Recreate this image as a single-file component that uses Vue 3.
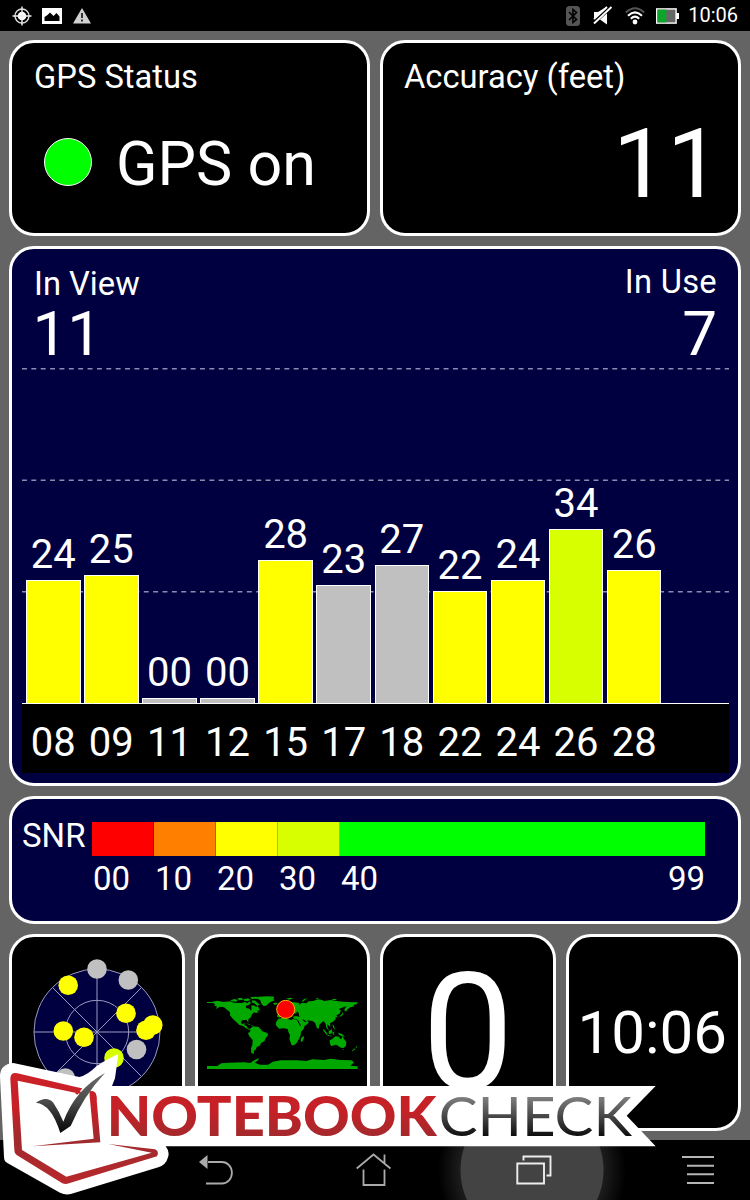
<script setup>
import { computed, ref } from "vue";

const time = ref("10:06");

const satellites = ref([
  { id: "08", snr: 24, used: true },
  { id: "09", snr: 25, used: true },
  { id: "11", snr: 0, used: false },
  { id: "12", snr: 0, used: false },
  { id: "15", snr: 28, used: true },
  { id: "17", snr: 23, used: false },
  { id: "18", snr: 27, used: false },
  { id: "22", snr: 22, used: true },
  { id: "24", snr: 24, used: true },
  { id: "26", snr: 34, used: true },
  { id: "28", snr: 26, used: true },
]);

const inUse = computed(() => satellites.value.filter((s) => s.used).length);

const pad = (n) => String(n).padStart(2, "0");

const barHeight = (snr) => Math.max(5, snr * 5.11 - 0.5) + "px";

const barColor = (sat) => {
  if (!sat.used) return "gray";
  return sat.snr >= 30 ? "lime" : "yellow";
};

const gridLines = [0.7, 112.3, 223.8];

// positions relative to the centre of the sky view
const sky = [
  { x: 0, y: -63, color: "#c0c0c0" },
  { x: 31.3, y: -52, color: "#c0c0c0" },
  { x: -28.8, y: -46.7, color: "#ffff00" },
  { x: 29, y: -18.7, color: "#ffff00" },
  { x: -33.7, y: -1, color: "#ffff00" },
  { x: -13, y: 5.3, color: "#ffff00" },
  { x: 49, y: -1.7, color: "#ffff00" },
  { x: 55.8, y: -7, color: "#ffff00" },
  { x: 39.5, y: 17.5, color: "#c0c0c0" },
  { x: 17, y: 26, color: "#d8ff00" },
  { x: -31.7, y: 46, color: "#c0c0c0" },
];
</script>

<template>
  <main>
    <div class="statusbar">
      <div class="status-icons">
        <svg class="i-gps" width="20" height="20" viewBox="0 0 20 20">
          <circle cx="10" cy="10" r="7" fill="none" stroke="#ddd" stroke-width="1.4" />
          <circle cx="10" cy="10" r="4.3" fill="#fff" />
          <path d="M10 .5v19M.5 10h19" stroke="#eee" stroke-width="1.4" />
        </svg>
        <svg class="i-pic" width="20" height="16" viewBox="0 0 20 16">
          <path fill="#fff" fill-rule="evenodd" d="M0 0h20v16H0zM2.500 13h15V8.500L14.500 5l-3 3L8 4.500 5.500 7 2.500 9z" />
        </svg>
        <svg class="i-warn" width="18" height="16" viewBox="0 0 18 16">
          <path d="M9 0l9 15.500H0z" fill="#d0d0d0" />
          <path d="M9 5v5M9 11.500v2" stroke="#222" stroke-width="1.800" />
        </svg>
      </div>
      <div class="status-icons">
        <svg class="i-bt" width="14" height="20" viewBox="0 0 14 20">
          <rect width="14" height="20" rx="3.500" fill="#555" />
          <path d="M3 6l7.500 7.500L7 16.500v-13l3.500 3L3 14" fill="none" stroke="#000" stroke-width="1.600" />
        </svg>
        <svg class="i-mute" width="20" height="19" viewBox="0 0 20 19">
          <path d="M1 6h4l9-5.500v18L7 13.500H1z" fill="#fff" />
          <path d="M0 16.500L18 .5" stroke="#000" stroke-width="5" />
          <path d="M1 17.500L18.500 1M1 13L14 1" stroke="#fff" stroke-width="1.800" />
        </svg>
        <svg class="i-wifi" width="20" height="18" viewBox="0 0 20 18">
          <path d="M.8 5.500Q10-3 19.200 5.500" fill="none" stroke="#555" stroke-width="2" />
          <path d="M3 8.700Q10 2 17 8.700M5.800 11.700Q10 7.500 14.200 11.700" fill="none" stroke="#fff" stroke-width="2" />
          <circle cx="10" cy="15" r="2.400" fill="#fff" />
        </svg>
        <svg class="i-batt" width="23" height="16" viewBox="0 0 23 16">
          <path d="M20 5h3v6h-3z" fill="#fff" />
          <rect x=".7" y=".9" width="19.400" height="14.200" fill="#666" stroke="#fff" stroke-width="1.400" />
          <path d="M1.400 1.600h9v12.800h-9z" fill="#0da52c" />
        </svg>
        <span class="clock">{{ time }}</span>
      </div>
    </div>

    <div class="dashboard">
      <section class="card half">
        <h2>GPS Status</h2>
        <div class="gps-state">
          <i class="led"></i>
          <span>GPS on</span>
        </div>
      </section>
      <section class="card half">
        <h2>Accuracy (feet)</h2>
        <p class="accuracy">11</p>
      </section>

      <section class="card chart">
        <div class="chart-head">
          <div class="in-view">
            <h2>In View</h2>
            <p>{{ satellites.length }}</p>
          </div>
          <div class="in-use">
            <h2>In Use</h2>
            <p>{{ inUse }}</p>
          </div>
        </div>
        <div class="plot">
          <svg class="grid-lines" width="707" height="335">
            <line v-for="y in gridLines" :key="y" x1="0" x2="707" :y1="y" :y2="y" />
          </svg>
          <div class="bars">
            <div v-for="sat in satellites" :key="sat.id" class="column">
              <span>{{ pad(sat.snr) }}</span>
              <div class="bar" :class="barColor(sat)" :style="{ height: barHeight(sat.snr) }"></div>
            </div>
          </div>
        </div>
        <div class="axis">
          <span v-for="sat in satellites" :key="sat.id">{{ sat.id }}</span>
        </div>
      </section>

      <section class="card snr">
        <span class="snr-label">SNR</span>
        <div class="scale">
          <div class="seg red"></div>
          <div class="seg orange"></div>
          <div class="seg yellow"></div>
          <div class="seg lime"></div>
          <div class="seg green"></div>
          <span>00</span>
          <span>10</span>
          <span>20</span>
          <span>30</span>
          <span class="last"><b>40</b><b>99</b></span>
        </div>
      </section>

      <section class="card tile">
        <svg width="150" height="150" viewBox="-75 -75 150 150">
          <circle r="63" fill="#000040" />
          <g fill="none" stroke="#9a9ac0" stroke-width="1">
            <circle r="63" />
            <circle r="31.700" />
            <path d="M-63 0H63M0-63V63M-44.500-44.500L44.500 44.500M-44.500 44.500L44.500-44.500" />
          </g>
          <circle v-for="(dot, i) in sky" :key="i" :cx="dot.x" :cy="dot.y" r="9.800" :fill="dot.color" />
        </svg>
      </section>

      <section class="card tile">
        <svg class="map" width="150.700" height="73" viewBox="49 201 452 219">
          <g fill="#00a800">
            <path d="M49 219L62 219 80 215 98 219 118 217 130 221 152 222 164 219 170 223 176 217 181 222 174 228 165 231 167 237 176 239 181 245 183 237 181 230 190 229 196 234 201 231 208 243 198 246 205 249 196 252 190 250 183 257 181 264 173 271 173 281 168 273 155 273 151 279 154 286 162 282 161 289 168 291 171 298 178 300 177 303 166 298 158 292 145 287 137 279 130 273 124 266 118 259 118 250 109 242 100 235 88 233 75 240 79 233 70 229 74 225 65 222 49 222z" />
            <path d="M119 214l12-4 10 3-4 5-14-1zM140 208l14-1 3 5-12 2zM158 211l14-3 8 4-9 5-11-2zM178 205l14-2 14 1-12 5-10 1zM185 214l9 1 8 8 6 4-9 3-8-7-9-3z" />
            <path d="M190 208L204 203 230 202 251 203 248 211 252 214 238 220 225 231 217 230 211 222 209 214 202 210z" />
            <path d="M247 222l12-1 2 4-9 3zM165 283l14 3-2 2zM181 288l7 2-5 1z" />
            <path d="M178 299L187 292 204 294 212 303 215 307 231 313 232 319 225 327 221 337 211 342 207 350 198 354 196 361 189 366 190 375 182 372 181 358 185 348 186 333 176 322 172 313 179 307z" />
            <path d="M263 269L275 267 287 265 290 269 301 273 307 270 320 272 323 280 334 291 342 290 339 300 331 308 330 319 325 329 318 342 310 349 303 349 299 338 296 329 298 319 293 308 291 300 278 298 265 299 256 289 256 280z" />
            <path d="M338 320l2 6-6 14-4-3 1-9zM265 239l6 1 3 8-9 2z" />
            <path d="M259 263L261 254 270 254 268 249 280 244 286 239 283 232 289 226 300 219 312 220 326 222 324 227 335 221 347 223 354 217 367 216 382 211 395 213 400 216 420 213 438 216 455 218 472 219 501 220 498 226 488 228 491 232 479 235 472 240 466 248 461 242 468 231 454 236 444 240 451 244 446 255 437 259 442 267 435 263 435 271 427 278 418 283 419 293 412 288 409 285 411 297 416 305 407 297 405 285 399 276 392 281 386 287 384 299 379 298 373 281 365 276 350 274 354 281 344 290 331 292 325 281 319 270 309 269 307 263 316 261 327 263 323 256 313 253 308 260 302 265 294 257 287 253 297 263 289 265 280 255 272 261 266 266z" />
            <path d="M398 300l7 7 6 9-4 1-10-14zM414 307l9-6 2 8-5 6-6-1zM425 310l8-2-4 4 2 7-5-3zM410 318l13 2 5 2-17-1zM442 311l12 4 9 8-10-1-8-5zM425 286l5 4 3 12-5-5zM447 260l7-5 3-7 1 8-8 7zM463 233l3 7-4 8z" />
            <path d="M417 334L425 330 434 322 446 323 446 328 452 330 455 321 460 330 467 338 466 350 459 357 450 356 443 351 436 347 422 351 418 345zM455 360l4 0-2 4zM496 350l3 5-4 3zM492 358l2 2-8 7-2-2z" />
            <path d="M286 209l10-3 12 2-12 4zM333 217l7-7 10-3-13 11zM372 209l9-3 3 3zM424 210l11 0 4 3-13 0z" />
            <path d="M49 411L80 411 92 403 115 401 160 400 179 402 188 395 205 387 202 394 192 401 208 407 232 407 247 398 270 394 320 394 346 396 366 391 400 393 420 389 450 393 482 394 490 400 479 410 501 412V420H49z" />
          </g>
          <path fill="#000" d="M316 251l5-3 4 6-2 9-5-6zM301 256l9-3 5 4-10 3zM319 274l9 16 3 0-9-17zM335 273l8 6 5-1-10-7z" />
          <circle cx="285" cy="241" r="27" fill="#f00" stroke="#ffb000" stroke-width="3" />
        </svg>
      </section>

      <section class="card tile">
        <span class="speed">0</span>
      </section>
      <section class="card tile">
        <span class="big-clock">{{ time }}</span>
      </section>
    </div>

    <nav>
      <button class="back">
        <svg width="34" height="32" viewBox="0 0 34 32">
          <path d="M9 8h14a9.500 10.300 0 0 1 0 21.500H7" fill="none" stroke="#aaa" stroke-width="1.800" />
          <path d="M0 8l8.500-7v14z" fill="#aaa" />
        </svg>
      </button>
      <button class="home">
        <svg width="36" height="34" viewBox="0 0 36 34">
          <path d="M.7 15.500L17.500 1.500 34.500 15.500M7.500 16.500V32h21V16.500M28.500 1.500V10" fill="none" stroke="#aaa" stroke-width="1.800" />
        </svg>
      </button>
      <button class="recents">
        <svg width="36" height="30" viewBox="0 0 36 30">
          <path d="M7.500 5.500V1.500H34.500V20.500H30.500M1.300 8.500H28V28.500H1.300z" fill="none" stroke="#eee" stroke-width="1.900" />
        </svg>
      </button>
      <button class="menu">
        <svg width="32" height="30" viewBox="0 0 32 30">
          <path d="M0 2h32M5 10.700h27M5 19.300h27M5 28h27" stroke="#b5b5b5" stroke-width="2" />
        </svg>
      </button>
    </nav>

    <!-- watermark -->
    <svg class="watermark" width="660" height="150" viewBox="0 360 1980 450">
      <defs>
        <linearGradient id="wm-red" x1="0" y1="430" x2="0" y2="760" gradientUnits="userSpaceOnUse">
          <stop offset="0" stop-color="#cc2127" />
          <stop offset="0.350" stop-color="#c42127" />
          <stop offset="0.600" stop-color="#9f2a2d" />
          <stop offset="1" stop-color="#b8282c" />
        </linearGradient>
        <linearGradient id="wm-gray" x1="0" y1="495" x2="0" y2="620" gradientUnits="userSpaceOnUse">
          <stop offset="0" stop-color="#858585" />
          <stop offset="1" stop-color="#0c0c0c" />
        </linearGradient>
        <linearGradient id="wm-tick" x1="0" y1="430" x2="0" y2="600" gradientUnits="userSpaceOnUse">
          <stop offset="0" stop-color="#6a6a6a" />
          <stop offset="0.500" stop-color="#4a4a4a" />
          <stop offset="1" stop-color="#0c0c0c" />
        </linearGradient>
      </defs>
      <path
        fill="#fff"
        d="M355 372L345 445 336 468H1967L1880 557 1967 649H497Q510 665 504 682 498 705 475 712L215 791Q198 797 180 788L22 699Q12 694 12 680L0 440Q0 402 40 399L238 441Q262 436 290 408 325 385 355 372z"
      />
      <path
        fill="url(#wm-red)"
        d="M31 447Q31 426 52 430L276 482Q287 485 289 497L301 637 98 649 281 626 269 497 53 452 66 660 199 740 455 668 325 642 465 658Q479 664 471 679L207 760Q197 764 187 760L50 675Q43 671 43 660z"
      />
      <path
        fill="#fff"
        d="M236 482L262 455 300 440 292 480 276 505z"
      />
      <path
        fill="url(#wm-red)"
        d="M236 473L247 475 232 494 226 491zM268 484L278 483Q288 486 289 497L290 510 270 508z"
      />
      <path fill="url(#wm-tick)" d="M108 518Q140 496 160 518 178 545 190 575 226 478 315 429 250 498 212 588L181 609Q154 522 108 518z" />
      <text class="wm-bold" x="320" y="618" textLength="990" lengthAdjust="spacingAndGlyphs">NOTEBOOK</text>
      <text class="wm-thin" x="1316" y="618" textLength="580" lengthAdjust="spacingAndGlyphs">CHECK</text>
    </svg>
  </main>
</template>

<style>
body {
  margin: 0;
  background-color: #000;
}
</style>

<style scoped>
main {
  position: relative;
  width: 750px;
  height: 1200px;
  overflow: hidden;
  display: flex;
  flex-direction: column;
  background-color: #646464;
  color: #fff;
  font-family: Roboto, sans-serif;
}

h2,
p {
  margin: 0;
  font-weight: 400;
}

svg {
  display: block;
  flex: none;
}

.statusbar {
  height: 31px;
  flex: none;
  display: flex;
  justify-content: space-between;
  padding: 0 12px;
  background-color: #000;
}

.status-icons {
  display: flex;
  align-items: center;
}

.i-pic {
  margin-left: 10px;
}

.i-warn {
  margin-left: 11px;
}

.i-mute {
  margin-left: 13px;
}

.i-wifi {
  margin-left: 12px;
}

.i-batt {
  margin-left: 11px;
}

.clock {
  margin-left: 9px;
  font-size: 20px;
  line-height: 31px;
}

.dashboard {
  flex: 1;
  padding: 9px 9px 0;
  display: grid;
  grid-template-columns: repeat(4, 1fr);
  grid-template-rows: 196px 540.5px 128.5px 197px;
  row-gap: 9.500px;
  column-gap: 10px;
  align-content: start;
}

.card {
  box-sizing: border-box;
  min-width: 0;
  border: 3px solid #fff;
  border-radius: 25px;
  background-color: #000;
}

.half {
  grid-column: span 2;
  padding: 15px 17px 0 22px;
}

.half + .half {
  padding-left: 21px;
}

h2 {
  font-size: 32.700px;
  line-height: 38px;
  white-space: nowrap;
}

.gps-state {
  display: flex;
  margin: 38px 0 0 10px;
  font-size: 61px;
  line-height: 60px;
}

.led {
  box-sizing: border-box;
  width: 48px;
  height: 48px;
  margin: 4px 24px 0 0;
  border: 1.5px solid #fff;
  border-radius: 50%;
  background-color: #00ff00;
}

.accuracy {
  margin-top: 20px;
  font-size: 96px;
  line-height: 96px;
  text-align: right;
}

.chart {
  grid-column: span 4;
  padding: 0 9.500px;
  background-color: #000040;
}

.chart-head {
  height: 119px;
  display: flex;
  justify-content: space-between;
  padding: 0 11.500px 0 12.500px;
}

.chart-head p {
  font-size: 62px;
  line-height: 62px;
}

.in-view {
  padding-top: 16px;
}

.in-view p {
  margin-left: -1.500px;
}

.in-use {
  padding-top: 14.500px;
  text-align: right;
}

.in-use h2 {
  letter-spacing: 0.3px;
}

.in-use p {
  padding-top: 1.500px;
}

.plot {
  height: 335px;
  display: grid;
  border-bottom: 1px solid #fff;
}

.grid-lines,
.bars {
  grid-area: 1 / 1;
}

.grid-lines line {
  stroke: #8c8cb0;
  stroke-width: 1.400;
  stroke-dasharray: 4.900 4.470;
}

.bars,
.axis {
  display: flex;
  align-items: flex-end;
  gap: 3.600px;
  padding-left: 4.500px;
}

.column,
.axis span {
  width: 54.500px;
  text-align: center;
  font-size: 40px;
}

.column span {
  display: block;
  line-height: 40px;
  margin-bottom: 5px;
}

.bar {
  box-sizing: border-box;
  border: 1px solid #fff;
  border-bottom: none;
}

.yellow {
  background-color: #ffff00;
}

.gray {
  background-color: #c0c0c0;
}

.lime {
  background-color: #d8ff00;
}

.axis {
  height: 69px;
  align-items: flex-start;
  background-color: #000;
}

.axis span {
  padding-top: 9px;
  line-height: 60px;
}

.snr {
  grid-column: span 4;
  display: flex;
  padding: 23.500px 33px 0 10px;
  background-color: #000040;
}

.snr-label {
  width: 70px;
  font-size: 33px;
  line-height: 28px;
}

.scale {
  flex: 1;
  display: grid;
  grid-template-columns: 62px 62px 62px 62px 1fr;
  grid-template-rows: 34px 40px;
}

.seg {
  box-sizing: border-box;
  border-right: 1px solid rgba(0, 0, 0, 0.25);
}

.seg.red {
  background-color: #ff0000;
}

.seg.orange {
  background-color: #ff8000;
}

.seg.green {
  background-color: #00ff00;
  border: none;
}

.scale span {
  padding-left: 1px;
  font-size: 33px;
  line-height: 45px;
}

.scale .last {
  display: flex;
  justify-content: space-between;
}

.scale b {
  font-weight: 400;
}

.tile {
  display: flex;
  align-items: center;
  justify-content: center;
}

.map {
  overflow: visible;
}

.speed {
  font-size: 164px;
  line-height: 190px;
}

.big-clock {
  margin-right: 2px;
  font-size: 60px;
}

nav {
  height: 60px;
  flex: none;
  display: flex;
  align-items: center;
  overflow: hidden;
  padding-left: 199px;
  background-color: #000;
}

nav button {
  flex: none;
  padding: 0;
  border: none;
  background: none;
}

.home {
  margin-left: 123px;
}

.recents {
  position: relative;
  margin-left: 124px;
}

/* touch feedback behind the icon */
.recents::before {
  content: "";
  position: absolute;
  width: 190px;
  height: 190px;
  left: -79px;
  top: -80px;
  border-radius: 50%;
  background: radial-gradient(circle, #434343 71px, #1c1c1c 72px, transparent 94px);
}

.recents svg {
  position: relative;
}

.menu {
  margin-left: 130px;
}

.watermark {
  position: absolute;
  left: 0;
  top: 1050px;
}

.wm-bold {
  font: 900 163px Lato, sans-serif;
  fill: url(#wm-red);
}

.wm-thin {
  font: 400 163px Lato, sans-serif;
  fill: url(#wm-gray);
}
</style>
